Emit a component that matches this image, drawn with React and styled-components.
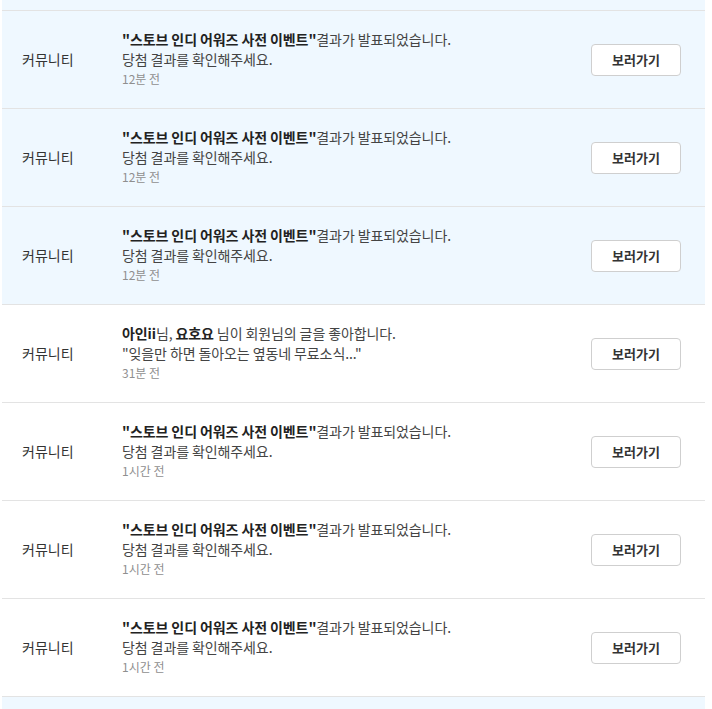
import React from 'react';
import styled, { createGlobalStyle } from 'styled-components';

const GlobalStyle = createGlobalStyle`
  body {
    margin: 0;
    background: #fff;
    font-family: 'Noto Sans CJK KR', 'Noto Sans', sans-serif;
  }
`;

const notices = [
  { id: 1, unread: true, kind: 'event', time: '12분 전' },
  { id: 2, unread: true, kind: 'event', time: '12분 전' },
  { id: 3, unread: true, kind: 'event', time: '12분 전' },
  { id: 4, unread: false, kind: 'like', time: '31분 전' },
  { id: 5, unread: false, kind: 'event', time: '1시간 전' },
  { id: 6, unread: false, kind: 'event', time: '1시간 전' },
  { id: 7, unread: false, kind: 'event', time: '1시간 전' },
];

const Notice = ({ item }) => (
  <Row $unread={item.unread}>
    <Category>커뮤니티</Category>
    <Body>
      {item.kind === 'event' ? (
        <>
          <Line>
            <b>"스토브 인디 어워즈 사전 이벤트"</b>결과가 발표되었습니다.
          </Line>
          <Line>당첨 결과를 확인해주세요.</Line>
        </>
      ) : (
        <>
          <Line>
            <b>아인ii</b>님, <b>요호요</b> 님이 회원님의 글을 좋아합니다.
          </Line>
          <Line>"잊을만 하면 돌아오는 옆동네 무료소식..."</Line>
        </>
      )}
      <Time>{item.time}</Time>
    </Body>
    <GoButton>보러가기</GoButton>
  </Row>
);

const App = () => (
  <Page>
    <GlobalStyle />
    <List>
      <Tail $unread $top />
      {notices.map((n) => (
        <Notice key={n.id} item={n} />
      ))}
      <Tail $unread />
    </List>
  </Page>
);

export default App;

const Page = styled.div`
  height: 709px;
  overflow: hidden;
  padding: 0 7px 0 2px;
`;

const List = styled.ul`
  list-style: none;
  margin: 0;
  padding: 0;
`;

const Tail = styled.li`
  height: ${(p) => (p.$top ? '10px' : '12px')};
  border-top: ${(p) => (p.$top ? 'none' : '1px solid #e3e3e3')};
  background: ${(p) => (p.$unread ? '#eff8ff' : '#fff')};
`;

const Row = styled.li`
  display: flex;
  align-items: center;
  height: 97px;
  border-top: 1px solid #e3e3e3;
  background: ${(p) => (p.$unread ? '#eff8ff' : '#fff')};
`;

const Category = styled.div`
  width: 120px;
  padding-left: 20px;
  padding-bottom: 1px;
  box-sizing: border-box;
  font-size: 14px;
  color: #333;
`;

const Body = styled.div`
  flex: 1;
  display: flex;
  flex-direction: column;
  padding-bottom: 2px;
`;

const Line = styled.div`
  font-size: 14px;
  line-height: 20px;
  letter-spacing: -0.1px;
  color: #444;
  white-space: nowrap;

  b {
    font-weight: 700;
    color: #222;
  }
`;

const Time = styled.div`
  font-size: 12px;
  line-height: 19px;
  color: #8f8f8f;
`;

const GoButton = styled.button`
  width: 90px;
  height: 32px;
  margin-right: 24px;
  border: 1px solid #cfcfcf;
  border-radius: 4px;
  background: #fff;
  font-family: inherit;
  font-size: 13px;
  font-weight: 700;
  color: #333;
  cursor: pointer;
`;
